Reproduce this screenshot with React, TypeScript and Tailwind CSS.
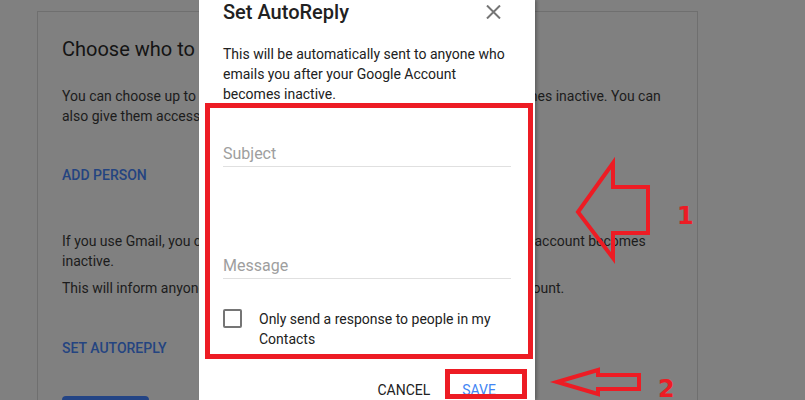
export default function App() {
  return (
    <div className="relative w-[805px] h-[400px] overflow-hidden bg-[#808080] font-['Roboto',sans-serif]">
      {/* dimmed page behind the dialog */}
      <div className="pl-[37px] pt-[11px]">
        <div className="w-[661px] h-[389px] border-x border-t border-[#6f6f6f] px-6 pt-[23px]">
          <h2 className="text-[20px] leading-7 text-[#141414] whitespace-nowrap">Choose who to let know &amp; what to share</h2>
          <p className="mt-[23px] text-[14px] leading-5 text-[#1c1c1c] whitespace-nowrap">
            You can choose up to 10 people to inform when your Google Account becomes inactive. You can
            <br />
            also give them access to some of your data.
          </p>
          <div className="mt-[39px] text-[14px] leading-5 font-medium text-[#244480]">ADD PERSON</div>
          <p className="mt-[46px] text-[14px] leading-5 text-[#1c1c1c] whitespace-nowrap">
            If you use Gmail, you can set up an automated reply, to let people know your account becomes
            <br />
            inactive.
          </p>
          <p className="mt-[7px] text-[14px] leading-5 text-[#1c1c1c] whitespace-nowrap">
            This will inform anyone that emails you that you are no longer using this account.
          </p>
          <div className="mt-[40px] text-[14px] leading-5 font-medium text-[#244480]">SET AUTOREPLY</div>
          <div className="mt-[38px] w-[87px] h-9 rounded bg-[#234485]" />
        </div>
      </div>

      {/* dialog */}
      <div className="absolute left-[199px] top-0 w-[336px] h-[400px] bg-white px-6 shadow-[2px_0_3px_rgba(0,0,0,0.25)]">
        <div className="flex items-start justify-between h-6">
          <div className="text-[20px] leading-6 font-medium text-[#212121]">Set AutoReply</div>
          <svg width="15" height="14" viewBox="0 0 15 14" className="mt-[5px] mr-[10px]">
            <path d="M1 0.5 L14 13.5 M14 0.5 L1 13.5" stroke="#757575" strokeWidth="2" />
          </svg>
        </div>
        <p className="mt-5 text-[14px] leading-5 text-[#212121]">
          This will be automatically sent to anyone who
          <br />
          emails you after your Google Account
          <br />
          becomes inactive.
        </p>
        <div className="mt-[38px] h-[25px] text-[16px] leading-6 text-[#9e9e9e] border-b border-[#e0e0e0]">Subject</div>
        <div className="mt-[87px] h-[25px] text-[16px] leading-6 text-[#9e9e9e] border-b border-[#e0e0e0]">Message</div>
        <div className="mt-[30px] flex gap-[17px]">
          <div className="w-[19px] h-[19px] shrink-0 rounded-[2px] border-2 border-[#757575]" />
          <div className="text-[14px] leading-5 text-[#212121]">Only send a response to people in my Contacts</div>
        </div>
        <div className="mt-[23px] -mr-px flex justify-end">
          <button className="h-9 px-4 text-[14px] leading-9 text-[#212121]">CANCEL</button>
          <button className="h-9 px-4 text-[14px] leading-9 text-[#4285f4]">SAVE</button>
        </div>
      </div>

      {/* red annotations */}
      <svg width="805" height="400" viewBox="0 0 805 400" className="absolute inset-0 pointer-events-none">
        <rect x="207.5" y="105.5" width="323" height="251" fill="none" stroke="#ed1c24" strokeWidth="5" />
        <rect x="447.5" y="371.5" width="77" height="25" fill="none" stroke="#ed1c24" strokeWidth="5" />
        <polygon
          points="578,212 613,163 613,187 648,187 648,233 613,233 613,258"
          fill="none"
          stroke="#ed1c24"
          strokeWidth="4"
        />
        <polygon
          points="557,382 598,370 598,375 639,375 639,389 598,389 598,394"
          fill="none"
          stroke="#ed1c24"
          strokeWidth="4"
        />
      </svg>
      <span className="absolute left-[677px] top-[206px] text-[24px] leading-[20px] font-bold text-[#ed1c24] font-['DejaVu_Sans',sans-serif]">1</span>
      <span className="absolute left-[658px] top-[379px] text-[24px] leading-[20px] font-bold text-[#ed1c24] font-['DejaVu_Sans',sans-serif]">2</span>
    </div>
  );
}
